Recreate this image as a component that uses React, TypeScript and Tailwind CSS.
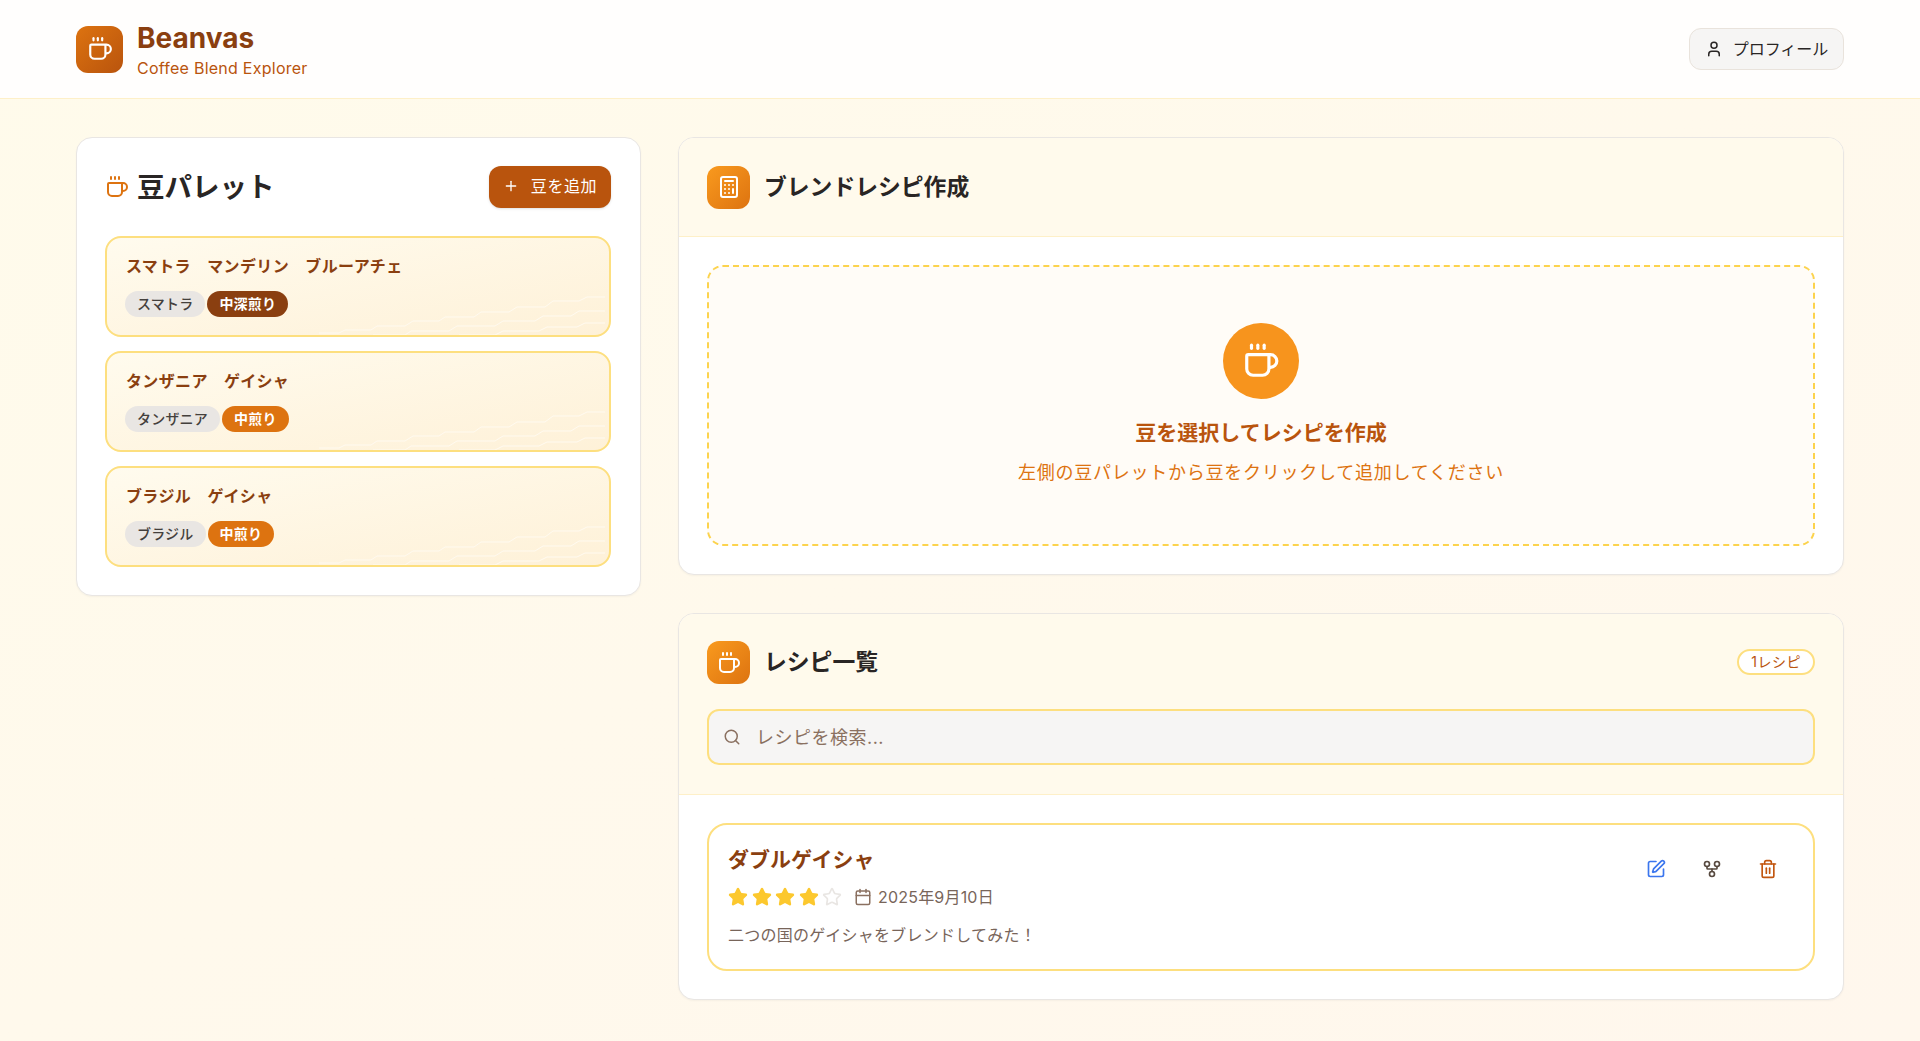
import { Calculator, Calendar, Coffee, GitFork, Plus, Search, SquarePen, Star, Trash2, User } from "lucide-react";

const beans = [
  { name: "スマトラ　マンデリン　ブルーアチェ", origin: "スマトラ", roast: "中深煎り", roastClass: "bg-[#8a3f10]" },
  { name: "タンザニア　ゲイシャ", origin: "タンザニア", roast: "中煎り", roastClass: "bg-[#dd7310]" },
  { name: "ブラジル　ゲイシャ", origin: "ブラジル", roast: "中煎り", roastClass: "bg-[#dd7310]" },
];

// 豆カード右下のうっすらした木目
function Grain() {
  return (
    <svg className="absolute right-0 bottom-0 w-[300px] h-[60px] pointer-events-none" viewBox="0 0 300 60" fill="none" stroke="#fffaf0" strokeWidth="1">
      <path d="M10 58 H30 L36 55 H62 L68 51 H96 L104 46 H130 L136 42 H165 L172 37 H200 L208 32 H236 L244 26 H270 L278 22 H296" />
      <path d="M64 60 H96 L102 56 H140 L148 51 H186 L194 46 H226 L234 41 H262 L270 36 H296" />
      <path d="M150 60 H186 L194 56 H230 L238 52 H268 L276 48 H296" />
    </svg>
  );
}

function BeanCard({ name, origin, roast, roastClass }: (typeof beans)[number]) {
  return (
    <div className="relative overflow-hidden h-[101px] rounded-2xl border-2 border-[#fddf7f] bg-gradient-to-br from-[#fffbee] to-[#fef1d8] px-[18px] pt-4">
      <Grain />
      <p className="relative ml-px text-base leading-6 font-semibold tracking-[0.35px] text-[#8a3f10] whitespace-pre">{name}</p>
      <div className="relative mt-[13px] flex gap-[2px]">
        <span className="h-[26px] rounded-full bg-[#e9e6e3] px-3 text-sm leading-[26px] font-medium tracking-[0.2px] text-[#44403c]">{origin}</span>
        <span className={`h-[26px] rounded-full px-3 text-sm leading-[26px] font-semibold tracking-[0.2px] text-white ${roastClass}`}>{roast}</span>
      </div>
    </div>
  );
}

function IconBox({ children }: { children: React.ReactNode }) {
  return (
    <div className="flex h-[43px] w-[43px] shrink-0 items-center justify-center rounded-xl bg-gradient-to-br from-[#f99a1e] to-[#dd7310] text-white">
      {children}
    </div>
  );
}

export default function App() {
  return (
    <div className="min-h-screen bg-gradient-to-br from-[#fffbeb] to-[#fff7ed] font-['Inter','Noto_Sans_CJK_JP',sans-serif] text-[#292524]">
      <header className="flex h-[99px] items-center justify-between border-b border-[#fef0c8] bg-[#fffefd] px-[76px]">
        <div className="flex items-center gap-[14px]">
          <div className="flex h-[47px] w-[47px] items-center justify-center rounded-xl bg-gradient-to-br from-[#dd7310] to-[#b9540d] text-white">
            <Coffee size={26} strokeWidth={2} />
          </div>
          <div className="pt-px">
            <h1 className="text-[28px] leading-[36px] font-bold text-[#8a3f10]">Beanvas</h1>
            <p className="text-base leading-6 tracking-[0.25px] text-[#b9540d]">Coffee Blend Explorer</p>
          </div>
        </div>
        <button className="flex h-[42px] w-[155px] items-center justify-center gap-[10px] rounded-xl border border-[#e9e3dc] bg-[#f6f5f4] text-base text-[#292524]">
          <User size={18} />
          プロフィール
        </button>
      </header>

      <main className="grid grid-cols-[565px_1fr] items-start gap-[37px] px-[76px] pt-[38px] pb-[39px]">
        <section className="rounded-2xl border border-[#e9e6e3] bg-white py-7 pl-7 pr-[29px] shadow-[0_1px_2px_rgba(0,0,0,0.04)]">
          <div className="flex items-center justify-between">
            <div className="flex items-center gap-2">
              <Coffee size={24} className="text-[#dd7310]" />
              <h2 className="text-[27.5px] leading-[42px] font-bold">豆パレット</h2>
            </div>
            <button className="flex h-[42px] w-[122px] items-center justify-center gap-[12px] rounded-xl bg-[#b9540d] pb-[2px] text-base tracking-[0.6px] text-white shadow-sm">
              <Plus size={16} />
              豆を追加
            </button>
          </div>
          <div className="mt-7 flex flex-col gap-[14px]">
            {beans.map((b) => (
              <BeanCard key={b.name} {...b} />
            ))}
          </div>
        </section>

        <div className="flex flex-col gap-[38px]">
          <section className="overflow-hidden rounded-2xl border border-[#e9e6e3] bg-white shadow-[0_1px_2px_rgba(0,0,0,0.04)]">
            <div className="flex h-[99px] items-center gap-[14px] border-b border-[#fef0c8] bg-[#fffaec] px-7">
              <IconBox>
                <Calculator size={24} />
              </IconBox>
              <h2 className="text-[22.8px] font-bold">ブレンドレシピ作成</h2>
            </div>
            <div className="p-7">
              <div className="flex h-[281px] flex-col items-center rounded-2xl border-2 border-dashed border-[#fcd34d] bg-[#fffcf7] pt-[56px]">
                <div className="flex h-[76px] w-[76px] items-center justify-center rounded-full bg-[#f7941d] text-white">
                  <Coffee size={38} />
                </div>
                <h3 className="mt-[18px] text-[21px] leading-8 font-bold text-[#b9540d]">豆を選択してレシピを作成</h3>
                <p className="mt-[10px] text-lg leading-7 tracking-[0.75px] text-[#dd7310]">左側の豆パレットから豆をクリックして追加してください</p>
              </div>
            </div>
          </section>

          <section className="overflow-hidden rounded-2xl border border-[#e9e6e3] bg-white shadow-[0_1px_2px_rgba(0,0,0,0.04)]">
            <div className="h-[181px] border-b border-[#fef0c8] bg-[#fffaec] px-7 pt-[27px]">
              <div className="flex items-center justify-between">
                <div className="flex items-center gap-[14px]">
                  <IconBox>
                    <Coffee size={24} />
                  </IconBox>
                  <h2 className="text-[22.8px] font-bold">レシピ一覧</h2>
                </div>
                <span className="mb-px h-[26px] rounded-full border-2 border-[#fddf7f] bg-white px-3 text-sm leading-[22px] tracking-[0.5px] text-[#b9540d]">
                  1レシピ
                </span>
              </div>
              <div className="relative mt-[25px]">
                <Search size={18} className="absolute top-[19px] left-4 text-[#8a7060]" />
                <input
                  placeholder="レシピを検索..."
                  className="h-[56px] w-full rounded-xl border-2 border-[#fddf7f] bg-[#f6f5f4] pl-[47px] text-lg tracking-[0.5px] placeholder:text-[#8a7060]"
                />
              </div>
            </div>
            <div className="p-7">
              <div className="flex h-[148px] justify-between rounded-[20px] border-2 border-[#fddf7f] bg-white px-[19px] pt-[19px]">
                <div>
                  <h3 className="text-[21px] leading-8 font-bold text-[#8a3f10]">ダブルゲイシャ</h3>
                  <div className="mt-[9px] flex items-center">
                    <div className="flex gap-[3.5px]">
                      {[1, 2, 3, 4, 5].map((n) => (
                        <Star
                          key={n}
                          size={20}
                          className={n <= 4 ? "fill-[#fcc82e] text-[#fcc82e]" : "text-[#e9e6e3]"}
                        />
                      ))}
                    </div>
                    <Calendar size={18} className="ml-[12px] text-[#8a7060]" />
                    <span className="ml-[6px] text-base tracking-[0.2px] text-[#78655a]">2025年9月10日</span>
                  </div>
                  <p className="mt-[14px] text-base leading-6 tracking-[0.26px] text-[#78655a]">二つの国のゲイシャをブレンドしてみた！</p>
                </div>
                <div className="mt-[15px] mr-4 flex h-5 gap-9">
                  <SquarePen size={20} className="text-[#3b76ee]" />
                  <GitFork size={20} className="text-[#57493f]" />
                  <Trash2 size={20} className="text-[#c2560f]" />
                </div>
              </div>
            </div>
          </section>
        </div>
      </main>
    </div>
  );
}
